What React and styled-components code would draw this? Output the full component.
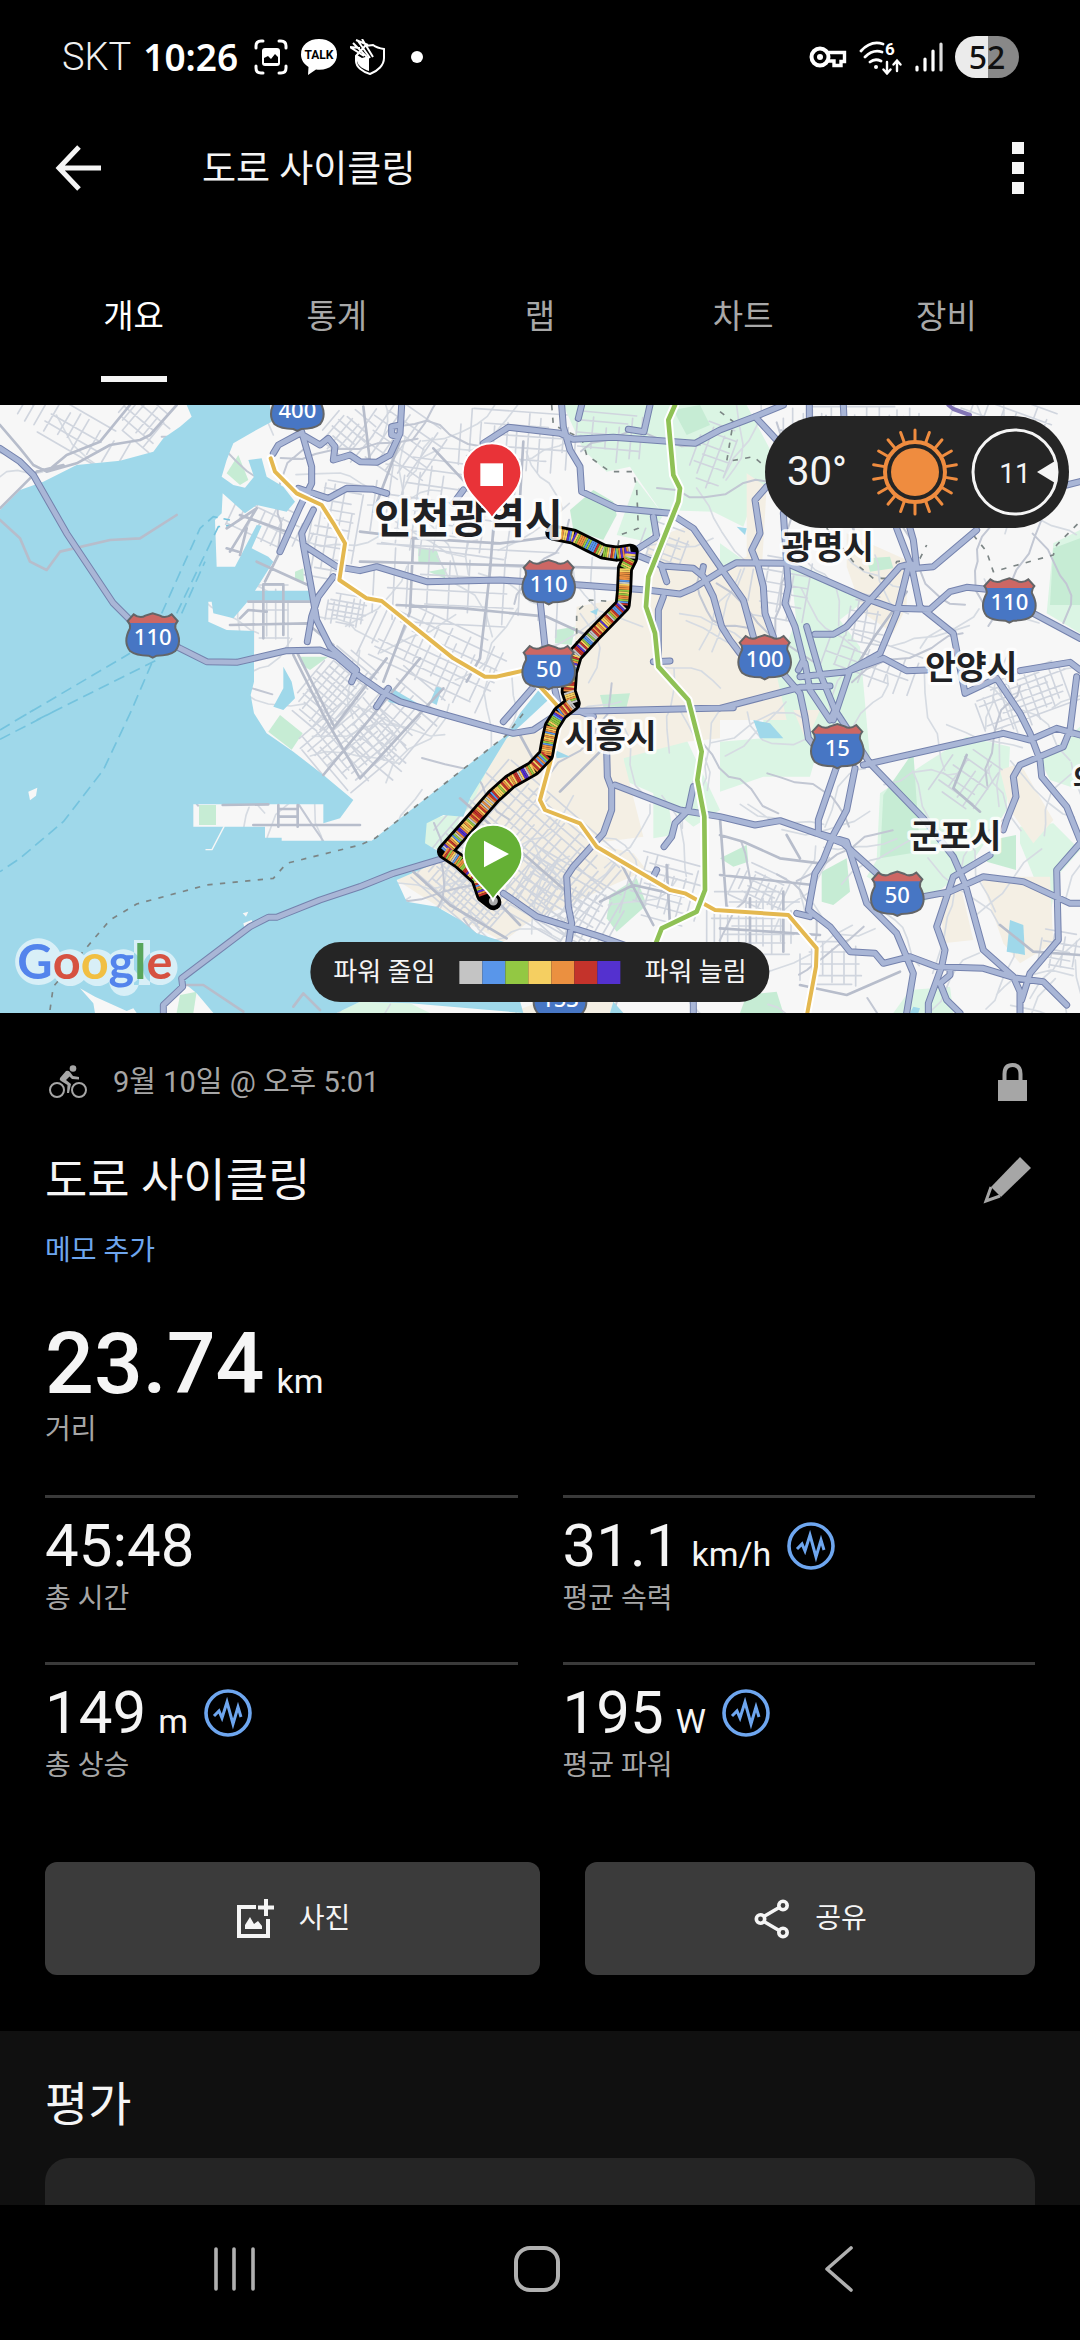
import React, { useState } from 'react';
import styled, { createGlobalStyle } from 'styled-components';

const GlobalStyle = createGlobalStyle`
  * {
    box-sizing: border-box;
  }
  body {
    margin: 0;
    background: #000;
    color: #f5f5f5;
    font-family: Roboto, 'Noto Sans CJK KR', sans-serif;
  }
  button {
    margin: 0;
    padding: 0;
    border: 0;
    background: none;
    color: inherit;
    font: inherit;
    cursor: pointer;
  }
  svg {
    display: block;
    flex: none;
  }
`;

const Screen = styled.div`
  min-height: 100vh;
  display: flex;
  flex-direction: column;
  background: #000;
`;

/* ---------- status bar ---------- */

const StatusBar = styled.div`
  height: 114px;
  padding: 0 61px 0 62px;
  display: flex;
  align-items: center;
  justify-content: space-between;
`;

const StatusGroup = styled.div`
  display: flex;
  align-items: center;
  gap: ${(p) => p.$gap}px;
`;

const Carrier = styled.span`
  font-size: 38px;
  line-height: 44px;
  font-weight: 300;
  color: #f0f0f0;
`;

const Clock = styled.span`
  margin-right: 4px;
  font-family: 'Noto Sans', sans-serif;
  font-size: 37px;
  line-height: 44px;
  font-weight: 600;
  color: #fff;
`;

const Dot = styled.span`
  width: 12px;
  height: 12px;
  margin-left: 13px;
  border-radius: 50%;
  background: #fff;
`;

const Battery = styled.span`
  width: 64px;
  height: 42px;
  border-radius: 21px;
  background: linear-gradient(90deg, #ebebeb 52%, #888 52%);
  color: #101010;
  font-family: 'Noto Sans', sans-serif;
  font-size: 32px;
  line-height: 42px;
  font-weight: 500;
  text-align: center;
`;

/* ---------- app bar and tabs ---------- */

const AppBar = styled.header`
  height: 108px;
  padding: 0 42px;
  display: flex;
  align-items: center;
`;

const IconButton = styled.button`
  height: 72px;
  display: flex;
  align-items: center;
  justify-content: center;
`;

const BackButton = styled(IconButton)`
  width: 72px;
`;

const MoreButton = styled(IconButton)`
  width: 40px;
`;

const BarTitle = styled.h1`
  flex: 1;
  margin: 0;
  padding: 4px 0 0 88px;
  font-size: 37px;
  line-height: 44px;
  font-weight: 400;
`;

const Tabs = styled.nav`
  padding: 0 32px 23px;
  display: flex;
`;

const Tab = styled.button`
  flex: 1;
  height: 160px;
  display: flex;
  flex-direction: column;
  align-items: center;
  justify-content: flex-end;
  gap: 39px;
  font-size: 33px;
  line-height: 40px;
  color: ${(p) => (p.$active ? '#fff' : '#a8a8a8')};

  &::after {
    content: '';
    width: 66px;
    height: 6px;
    background: ${(p) => (p.$active ? '#f5f5f5' : 'transparent')};
  }
`;

/* ---------- map ---------- */

const MapBox = styled.section`
  position: relative;
  aspect-ratio: 1080 / 608;
  overflow: hidden;
  background: #f7f7f7;
`;

const MapSvg = styled.svg`
  width: 100%;
  height: 100%;
`;

const Weather = styled.div`
  position: absolute;
  top: 11px;
  right: 11px;
  height: 112px;
  padding: 0 10px 0 22px;
  display: flex;
  align-items: center;
  border-radius: 56px;
  background: #252525;
`;

const Temperature = styled.span`
  width: 84px;
  font-size: 40px;
  line-height: 48px;
`;

const WindDial = styled.svg`
  margin-left: 12px;
`;

const Legend = styled.div`
  position: absolute;
  bottom: 11px;
  left: 50%;
  transform: translateX(-50%);
  height: 60px;
  padding: 0 23px;
  display: flex;
  align-items: center;
  gap: 24px;
  border-radius: 30px;
  background: #252525;
  font-size: 26px;
  line-height: 36px;
  white-space: nowrap;
`;

const Swatches = styled.div`
  display: flex;
`;

const Swatch = styled.span`
  width: 23px;
  height: 23px;
  background: ${(p) => p.$color};
`;

/* ---------- summary ---------- */

const Summary = styled.main`
  padding: 42px 45px 56px;
`;

const Row = styled.div`
  height: 54px;
  display: flex;
  align-items: center;
`;

const Meta = styled(Row)`
  color: #a6a6a6;
`;

const DateText = styled.span`
  flex: 1;
  margin-left: 22px;
  font-size: 29px;
  line-height: 36px;
`;

const TitleRow = styled(Row)`
  margin-top: 44px;
  justify-content: space-between;
`;

const Title = styled.h2`
  margin: 0;
  font-size: 46px;
  line-height: 54px;
  font-weight: 400;
`;

const EditButton = styled(IconButton)`
  width: 56px;
  color: #a6a6a6;
`;

const NoteButton = styled.button`
  display: block;
  margin-top: 26px;
  font-size: 28px;
  line-height: 36px;
  color: #6ea6ef;
`;

const Distance = styled.div`
  margin-top: 52px;
`;

const Value = styled.div`
  display: flex;
  align-items: baseline;
  gap: 12px;
  height: ${(p) => (p.$large ? 86 : 60)}px;
  font-size: ${(p) => (p.$large ? 86 : 60)}px;
  line-height: ${(p) => (p.$large ? 86 : 60)}px;
  font-weight: ${(p) => (p.$large ? 500 : 400)};

  svg {
    align-self: center;
    margin-left: 4px;
  }
`;

const Unit = styled.span`
  font-size: 34px;
  line-height: 36px;
  font-weight: 400;
`;

const Label = styled.div`
  margin-top: 5px;
  font-size: 28px;
  line-height: 36px;
  color: #a6a6a6;
`;

const Stats = styled.div`
  margin-top: 47px;
  display: grid;
  grid-template-columns: 1fr 1fr;
  gap: 45px;
`;

const Stat = styled.div`
  padding-top: 18px;
  border-top: 3px solid #3a3a3a;
`;

const Actions = styled.div`
  margin-top: 78px;
  display: grid;
  grid-template-columns: 11fr 10fr;
  gap: 45px;
`;

const ActionButton = styled.button`
  height: 113px;
  display: flex;
  align-items: center;
  justify-content: center;
  gap: 24px;
  border-radius: 12px;
  background: #3b3b3b;
  font-size: 28px;
  line-height: 36px;
`;

/* ---------- rating and system navigation ---------- */

const Rating = styled.section`
  flex: 1;
  padding: 44px 45px 0;
  display: flex;
  flex-direction: column;
  gap: 23px;
  background: #101010;
`;

const RatingTitle = styled.h2`
  margin: 0;
  font-size: 47px;
  line-height: 60px;
  font-weight: 400;
`;

const RatingCard = styled.div`
  flex: 1;
  min-height: 47px;
  border-radius: 24px 24px 0 0;
  background: #252525;
`;

const SystemNav = styled.nav`
  height: 135px;
  padding: 0 90px 0 84px;
  display: flex;
  align-items: center;
`;

const SystemButton = styled(IconButton)`
  flex: 1;
  padding-bottom: 8px;
`;

/* ---------- icons ---------- */

const CaptureIcon = () => (
  <svg width="34" height="36" viewBox="0 0 34 36" fill="none" stroke="#fff" strokeWidth="3" strokeLinecap="round">
    <path d="M2 9V7Q2 2 7 2H9M25 2H27Q32 2 32 7V9M32 27V29Q32 34 27 34H25M9 34H7Q2 34 2 29V27" />
    <rect x="8" y="9" width="18" height="18" rx="3" fill="#fff" stroke="none" />
    <path d="M10 24V19L14 17L17 20L21 15L24 18V24Z" fill="#000" stroke="none" />
  </svg>
);

const TalkIcon = () => (
  <svg width="38" height="36" viewBox="0 0 38 36">
    <path d="M19 0C8.500 0 1 6 1 15.500C1 21 4 25 8.500 28L8 36L16 30.500C29 32 37 25 37 15.500C37 6 29.500 0 19 0Z" fill="#fff" />
    <text x="19" y="20" textAnchor="middle" fontFamily="Roboto, sans-serif" fontWeight="700" fontSize="12" fill="#000">TALK</text>
  </svg>
);

const ShieldIcon = () => (
  <svg width="36" height="36" viewBox="0 0 36 36">
    <path d="M6 17V22C6 28 13 33 20 35C28 32 34 26 34 19V10Q27 9 23 6L15 7Z" fill="none" stroke="#fff" strokeWidth="2" />
    <path d="M7 16L12 19L19 17V32C13 30 8 27 7 22Z" fill="#fff" />
    <path d="M0 8L14 17M3 4L17 18M8 2L20 19M12 0L23 18M0 8L10 9M6 1L18 6" stroke="#fff" strokeWidth="2" />
  </svg>
);

const KeyIcon = () => (
  <svg width="38" height="22" viewBox="0 0 38 22" fill="none" stroke="#fff">
    <path d="M18 6.500H35.500V15.500H32V19.500H25V15H18" strokeWidth="3.400" />
    <circle cx="11" cy="11" r="8.500" strokeWidth="4" />
    <circle cx="11" cy="11" r="3" fill="#fff" stroke="none" />
  </svg>
);

const WifiIcon = () => (
  <svg width="44" height="36" viewBox="0 -2 44 36" fill="none" stroke="#fff" strokeWidth="2.800" strokeLinecap="round">
    <path d="M2 10Q12 -1 24 3M6 16Q14 8 23 11M11 21Q16 17 22 20" />
    <circle cx="17" cy="26" r="2" fill="#fff" stroke="none" />
    <path d="M28 21V32M24.500 28.500L28 32.500L31.500 28.500M38 30V20M34.500 23.500L38 19.500L41.500 23.500" strokeWidth="2.400" />
    <text x="26" y="14" fill="#fff" stroke="none" fontFamily="Roboto, sans-serif" fontSize="17" fontWeight="700">6</text>
  </svg>
);

const SignalIcon = () => (
  <svg width="28" height="30" viewBox="0 0 28 30" stroke="#fff" strokeWidth="3.200" strokeLinecap="round">
    <path d="M2 25V28M10 17V28M18 9V28" />
    <path d="M26 2V28" stroke="#ddd" />
  </svg>
);

const BackIcon = () => (
  <svg width="46" height="46" viewBox="0 0 46 46" fill="none" stroke="#f5f5f5" strokeWidth="5">
    <path d="M24 2L4 23L24 44M4 23H46" />
  </svg>
);

const MoreIcon = () => (
  <svg width="12" height="52" viewBox="0 0 12 52" fill="#f5f5f5">
    <path d="M0 0H12V12H0ZM0 20H12V32H0ZM0 40H12V52H0Z" />
  </svg>
);

const BikeIcon = () => (
  <svg width="46" height="34" viewBox="0 0 46 34" fill="none" stroke="#a6a6a6">
    <circle cx="12" cy="25" r="7" strokeWidth="2" />
    <circle cx="34" cy="25" r="7" strokeWidth="2" />
    <circle cx="28" cy="3.500" r="3.300" fill="#a6a6a6" stroke="none" />
    <path d="M15 13L21 6Q23 5 25 7L28 11L34 12V14.500L27 14L24.500 11.500L21 15L26 19L24 28H22L22.500 20L16 16Q14 15 15 13Z" fill="#a6a6a6" stroke="none" />
  </svg>
);

const LockIcon = () => (
  <svg width="42" height="38" viewBox="0 0 42 38" fill="#a6a6a6">
    <path d="M5 17H34V38H5Z" />
    <path d="M11.500 18V11Q11.500 2 19.500 2T27.500 11V18" fill="none" stroke="#a6a6a6" strokeWidth="4" />
  </svg>
);

const PencilIcon = () => (
  <svg width="48" height="48" viewBox="0 0 48 48" fill="currentColor">
    <path d="M37 1L48 12L18 41L8 31Z" />
    <path d="M8 31L3 45L17 40" fill="none" stroke="currentColor" strokeWidth="3" />
  </svg>
);

const PulseIcon = () => (
  <svg width="48" height="48" viewBox="0 0 48 48" fill="none" stroke="#6ea6ef">
    <circle cx="24" cy="24" r="22" strokeWidth="3.600" />
    <path d="M10 27L15 22L18 29L23 13L29 35L34 18L37 28" strokeWidth="3" />
  </svg>
);

const PhotoIcon = () => (
  <svg width="40" height="40" viewBox="0 0 40 40" fill="none" stroke="#f5f5f5" strokeWidth="4">
    <path d="M21 8H4V37H33V20" />
    <path d="M31 0V17M23 8.500H39" />
    <path d="M10 30V26L15 18L19 25L23 22L27 27V30Z" fill="#f5f5f5" stroke="none" />
  </svg>
);

const ShareIcon = () => (
  <svg width="38" height="40" viewBox="0 0 38 40" fill="none" stroke="#f5f5f5" strokeWidth="3.600">
    <path d="M10 18L27 8M10 22L27 32" />
    <circle cx="7.500" cy="20" r="4.200" />
    <circle cx="30" cy="6.500" r="4.200" />
    <circle cx="30" cy="33.500" r="4.200" />
  </svg>
);

const rays = Array.from({ length: 18 }, (_, i) => i * 20);

const SunIcon = () => (
  <svg width="88" height="88" viewBox="-44 -44 88 88">
    <circle r="24" fill="#ef8c3f" />
    <circle r="30" fill="none" stroke="#ef8c3f" strokeWidth="4" />
    {rays.map((a) => (
      <path key={a} d="M0 -31V-42" stroke="#ef8c3f" strokeWidth="3" strokeLinecap="round" transform={`rotate(${a})`} />
    ))}
  </svg>
);

/* ---------- map data, three units per pixel ---------- */

const WATER = `M0 315L60 255L130 230L230 180L360 167L460 140L490 100L540 65L575 35L560 0L810 0L815 50L760 80L700 115
  L680 165L665 215L700 240L735 248L762 215L745 165L785 160L800 215L850 245L885 290L860 320L770 300L735 325L668 265
  L665 325L645 345L650 485L705 485L770 360L785 362L755 430L805 455L820 470L765 557L935 557L930 587L745 587L700 640
  L640 625L635 590L625 590L625 650L680 675L762 678L762 830L752 870L762 925L800 985L880 1040L970 1110L1060 1185
  L1020 1240L970 1255L970 1198L580 1198L580 1265L795 1265L795 1298L845 1298L845 1307L1115 1307L1520 990L1560 925
  L1620 850L1650 880L1580 945L1520 1000L1410 1180L1390 1235L1330 1230L1280 1255L1275 1315L1325 1345L1305 1375
  L1190 1425L1220 1490L1310 1505L1380 1545L1430 1585L1510 1610L1570 1824L1230 1795L1080 1790L1010 1824L640 1824
  L590 1765L560 1740L490 1800L480 1824H410L400 1810L380 1818L285 1775L240 1750L280 1795L285 1824H0Z`;

const PALE_GREEN = [
  'M1690 0H2240L2340 190L2260 280L2230 365L2140 320L1980 315L1910 215L1890 185L1820 200L1750 135Z',
  'M1850 390L1910 225L1990 330L1940 410Z',
  'M2160 415L2230 465L2260 610L2230 690L2160 560Z',
  'M2370 465L2540 545L2590 590L2460 690L2390 660Z',
  'M2400 615L2490 605L2580 725L2610 1060L2450 1045L2430 1115L2290 1115L2160 1160L2160 1010L2290 1000L2290 900Z',
  'M2630 1365L2640 1165L2760 1085L2900 995L3030 1025L3020 1215L2900 1395L2760 1500L2600 1415Z',
  'M3120 1065L3240 965V1155L3150 1125Z',
  'M3060 1265L3160 1255L3240 1335L3170 1415L3150 1535L3060 1315Z',
  'M3160 415L3240 375V685L3140 625Z',
  'M2730 1755L2850 1745L2860 1824H2680Z',
  'M1870 1055L2060 1005L2160 1215L2080 1265L1960 1165L1870 1125Z',
  'M1270 1250L1340 1230L1500 1015L1560 975L1460 1165L1380 1235L1350 1345L1275 1320Z',
  'M1080 1790L1230 1795L1290 1824H1010Z',
  'M1960 1160L2000 1160L2020 1290L1960 1300Z',
];

const BEIGE = [
  'M1730 605L1840 585L1950 545L1940 405L2060 365L2160 485L2160 1000L2060 1010L1870 1060L1930 1295L1780 1315L1900 1345L1940 1395L1580 1555L1510 1610L1330 1515L1190 1425L1330 1345L1400 1235L1500 1005L1640 975L1680 885L1720 785Z',
  'M2240 205L2300 245L2280 585L2360 945H2160V485L2240 455Z',
  'M2540 385L2720 465L2720 605L2680 685L2590 625L2540 485Z',
  'M2820 1455L2880 1435L2920 1605L2830 1615Z',
  'M3000 1095L3060 1075L3160 1245L3100 1315L3030 1215Z',
  'M2940 1415L3150 1415L3160 1615L3060 1675L3010 1615Z',
  'M1530 1824L1620 1790H1850L1830 1824Z',
  'M2380 915H2460L2420 1010Z',
];

const GREEN = [
  'M680 205L715 150L745 225L720 240Z',
  'M885 500L910 490L912 530L885 525Z',
  'M900 755L985 755L930 795L905 780Z',
  'M597 1200H648V1260H597Z',
  'M840 930L908 985L875 1034L805 980Z',
  'M1255 430L1310 435L1325 480L1255 470Z',
  'M1285 500L1340 490L1335 520Z',
  'M1710 315L1780 255L1840 290L1850 330L1810 405L1720 375Z',
  'M1665 675L1725 665L1715 720L1665 715Z',
  'M1800 870L1890 865L1880 905L1810 905Z',
  'M2020 15L2100 0L2130 60L2060 90Z',
  'M1830 1470L1910 1420L1940 1500L1850 1580L1820 1540Z',
  'M2465 1400L2540 1360L2550 1460L2500 1500L2465 1490Z',
  'M2160 1360L2240 1320L2245 1370L2200 1385Z',
  'M2640 1360L2650 1170L2740 1040L2760 1340Z',
  'M3000 1300L3048 1290V1395L2960 1370Z',
  'M540 1770L590 1760L580 1824H530Z',
  'M2240 1770L2330 1760L2350 1824H2220Z',
  'M2600 460L2670 455L2680 490L2610 500Z',
  'M3160 430L3240 400V600L3150 600Z',
];

const SMALL_WATER = [
  'M850 785L875 830L885 880L850 915L820 905L850 850Z',
  'M1175 850L1270 905L1240 910L1165 890Z',
  'M1310 845L1325 850L1310 900L1290 890Z',
  'M2260 945L2310 955L2350 1000L2280 1000Z',
  'M3030 1545L3070 1560L3075 1650L3020 1640Z',
  'M1770 620L1795 610L1790 630Z',
  'M2210 365L2240 370L2235 390Z',
  'M1665 1035L1710 1055L1670 1060Z',
  'M1840 1790L1870 1824H1830Z',
  'M2740 1805L2760 1810L2755 1824H2730Z',
  'M795 240L850 260L870 275L860 285L800 255Z',
];

const LAND_BITS = ['M85 1160L112 1148L108 1172L90 1186Z', 'M730 1555L755 1545L760 1560L735 1575Z', 'M728 1525L745 1520L738 1535Z'];

const ROADS = [
  'M0 345L60 400L90 470L140 495L180 440L330 405L420 400L530 330',
  'M0 60L60 130L100 180L140 200',
  'M140 200L200 150L300 110L390 0',
  'M140 200L230 175L330 120L420 105L450 90L530 0',
  'M0 310L60 250L110 200L190 180',
  'M1090 5L1110 170M1200 110L1120 320',
  'M1080 380L1250 400L1500 415L1660 395',
  'M1190 600L1390 610L1640 635L1780 700',
  'M1490 240L1470 500L1440 760L1400 830',
  'M1240 400L1230 620L1150 830',
  'M1300 130L1450 290',
  'M1080 470L1500 480L1860 490',
  'M1570 110L1560 280L1530 300',
  'M790 540V700M850 540V690M790 538H850M745 590H935M690 660L920 655L1000 720',
  'M720 640L745 615L800 620',
  'M680 370L770 310M720 330L860 380M690 440L770 310M720 450L740 370M680 430L715 440',
  'M840 440L795 530M770 470L935 545',
  'M880 750L970 930L1080 1120',
  'M668 1200L805 1198M835 1200V1265M893 1200V1265M760 1260H1080M840 1212H890M840 1235H890',
  'M1000 970L1160 760M970 1110L1260 760M1080 1120L1330 850M890 740L1000 960',
  'M2160 1290L2230 1310L2340 1360L2460 1375M2180 1510L2160 1240',
  'M2360 1290L2400 1360M2160 1410L2440 1440M2160 1570L2460 1590M2250 1480V1700M2350 1460V1640',
  'M1680 1160L1780 1060L1810 1030M1560 990L1620 1100',
  'M1380 1180L1700 1460M1340 1330L1560 1560M1240 1400L1350 1500L1520 1600',
  'M2560 800L2620 700L2720 560',
  'M2900 1050L2860 1150L2940 1220',
  'M3240 1650L3100 1640L3000 1560',
  'M1800 1490L1900 1440L2080 1480M1860 1370L1960 1560M2000 1380L2010 1560',
  'M2400 1740L2540 1770L2700 1700',
  'M560 1740H610L730 1820M880 1805L910 1765L960 1815',
];

const HIGHWAYS = [
  'M0 130L60 170L100 210L200 385L340 595L400 655L540 730L620 770L710 772L860 737L960 735L1010 755L1080 815L1145 860L1200 890L1320 925L1480 970L1540 985L1600 975L1660 935',
  'M820 145L835 120L900 85L960 120L985 100L1005 125L1000 165L1050 150L1080 170L1130 172L1170 150L1200 85L1205 0M1200 60L1175 65V90L1195 95',
  'M905 80L935 185L935 235L900 305L840 440',
  'M895 250L985 280L1040 250L1120 253L1160 265',
  'M940 315L905 385L910 420L1010 485L1080 497L1130 485L1280 530L1500 525L1740 540L1940 555L2040 567L2080 550L2160 500L2210 473L2360 475L2610 585L2680 610L2790 613L2850 560L2900 547L2960 553',
  'M910 420L935 555L950 645L990 725L1070 795L1055 830',
  'M1000 515L955 575L935 635L922 710',
  'M1450 115L1525 67L1680 85L1720 103L1840 97L2085 115L2160 75L2265 35L2350 0M2265 35L2330 105',
  'M1685 0L1690 65L1710 135L1740 185L1745 260L1850 310L2010 325L2080 370L2160 485L2230 585L2260 695',
  'M1950 0L1932 80L1885 73M1745 0L1735 40M1360 295L1390 255',
  'M1860 435L1900 440L1970 395L1960 335M1910 450L1990 483L2080 490L2105 510L2110 485M1985 485L2000 530',
  'M2110 515L2140 575L2165 665L2190 705L2220 745',
  'M1990 575L1975 615V765M1960 770L2010 768',
  'M1620 585L1635 725M1165 850L1130 905M1610 835L1510 950M1665 855L1680 920L2200 908',
  'M490 1824L490 1800L548 1745L545 1720L750 1565L805 1537H830L960 1485L1080 1445L1180 1405L1330 1360',
  'M1820 1035L1822 1115L1835 1150V1215L1810 1285L1720 1385L1700 1415L1705 1505L1715 1555L1705 1620',
  'M1845 1140L2040 1215L2160 1235L2265 1260L2340 1247L2450 1285L2530 1315L2630 1405',
  'M2080 1145L2065 1215L2025 1255L2015 1295L1992 1325M1970 1395L1960 1415M1730 915L1780 935',
  'M1510 1465L1610 1535L1800 1595L1900 1630M2080 1824V1780',
  'M2428 0V40M2530 0L2532 40M3100 625L3240 700',
  'M2300 245L2265 285L2280 385L2255 435L2275 485L2290 545L2295 625L2320 695',
  'M2350 325L2360 475L2365 545L2355 595L2385 665L2410 765L2395 795M2340 795L2400 865L2415 935L2425 1000L2450 1030',
  'M2420 665L2460 805L2505 915M2445 688H2500L2540 665L2700 485L2720 480',
  'M2690 370L2730 475L2750 485L2740 405L2730 370M2735 485L2760 605L2860 685L2895 865L2990 820L3060 925L3090 985L3120 1065L3125 1115L3200 1205L3240 1305',
  'M2930 375L2800 485L2750 490M2725 485L2690 625L2640 745L2550 795L2500 945',
  'M2160 910L2400 847L2490 843M2400 815L2540 800L2650 760L2720 797L2780 795',
  'M3060 797L3210 772L3240 795M3230 815L3210 975L3190 1025L3060 1080L3040 1115L3048 1175L3020 1245L3010 1275M3200 240L3240 230',
  'M2415 775L2430 855L2490 945L2505 915L2610 1075L2770 1240L2860 1355L2895 1435L2950 1635L3040 1715L3060 1760V1824',
  'M2590 1080L3010 985L3090 1005L3170 970L3240 990',
  'M2510 1085L2455 1245V1285L2540 1310L2600 1495L2690 1585L2740 1705L2720 1824',
  'M2565 1090L2540 1215L2500 1290L2470 1365L2445 1405L2425 1515L2490 1565L2550 1640L2625 1645L2650 1675L2730 1655L2810 1685L2950 1690L3050 1720L3130 1730L3200 1800',
  'M2770 1475L2850 1460L2950 1415L3070 1430L3210 1495H3240M2970 1350L2860 1415L2810 1565L2835 1635L2825 1685L2785 1795V1824',
  'M3240 1315L3170 1395L3175 1605L3090 1705L3065 1785M2850 1690V1710L2820 1735L2840 1785L2880 1824',
  'M2390 1525L2430 1535',
];

const YELLOW_LINE = 'M812 160L825 200L890 265L965 300L1000 355L1035 415L1018 525L1100 580L1145 588L1360 760L1455 815H1490L1570 797L1625 850L1670 900L1675 960L1650 1075L1620 1185L1635 1215L1740 1255L1790 1325L2010 1455L2055 1465L2145 1515L2365 1530L2450 1630L2448 1685L2422 1824';
const GREEN_LINE = 'M2025 0L2005 45L2020 210L2040 250L2035 290L1945 515L1938 605L1965 685L1975 785L2065 885L2105 1040L2092 1125L2113 1235L2115 1455L2090 1520L1985 1570L1950 1660';

const BORDERS = [
  'M150 1815L160 1745L245 1645L330 1545L410 1497L620 1440L820 1420L860 1375L1080 1320L1125 1300L1520 990L1570 925',
  'M1655 0L1660 60L1745 100L1760 150L1830 200H1900L1910 250L1915 370L1860 390L1850 440',
  'M1730 800V620L1770 585L1840 590',
  'M2160 20L2200 50L2180 170L2260 155L2290 180',
  'M2480 370L2560 470L2620 520H2670L2690 470L2760 460L2780 420',
  'M2920 390L2960 440L2980 500L3160 450L3170 420L3240 350',
];

const FERRIES = [
  'M50 945L390 745M110 945L480 760',
  'M485 625L600 370L640 335L690 345M530 625L655 365L700 360M545 625L615 470',
  'M455 775L395 915L310 1095L190 1250L60 1360L0 1400M0 975L100 915M0 1003L170 915',
];

const SHIELDS = [
  [892, 10, '400'], [458, 690, '110'], [1646, 530, '110'], [1646, 785, '50'], [3028, 585, '110'],
  [2294, 755, '100'], [2512, 1022, '15'], [2692, 1465, '50'], [1680, 1775, '153'],
];

const CITIES = [
  [1122, 385, 123, '인천광역시'], [1694, 1030, 100, '시흥시'], [2346, 463, 100, '광명시'],
  [2776, 823, 100, '안양시'], [2728, 1328, 100, '군포시'], [3218, 1153, 84, '의왕시'],
];

const ROUTE = [
  [1660, 383], [1720, 395], [1770, 420], [1810, 440], [1850, 446], [1892, 440], [1890, 460],
  [1875, 490], [1872, 560], [1868, 600], [1780, 690], [1725, 750], [1710, 800], [1706, 860], [1718, 895],
  [1680, 925], [1655, 965], [1645, 1010], [1638, 1050], [1600, 1090], [1530, 1130], [1480, 1175], [1410, 1255],
  [1335, 1340], [1380, 1370], [1435, 1420], [1452, 1470], [1480, 1492],
];

const POWER_COLORS = ['#c4c4c4', '#5996ea', '#93c843', '#f5cf61', '#eb9040', '#c4332b', '#5431cf'];

// small repeatable random so the street texture does not change between renders
const makeRandom = (seed) => {
  let s = seed;
  return () => {
    s = (s * 16807) % 2147483647;
    return s / 2147483647;
  };
};

const wander = (count, seed, length) => {
  const rnd = makeRandom(seed);
  let d = '';
  for (let i = 0; i < count; i++) {
    let x = rnd() * 3240;
    let y = rnd() * 1824;
    let a = rnd() * Math.PI * 2;
    d += `M${Math.round(x)} ${Math.round(y)}`;
    for (let j = 0; j < length; j++) {
      a += (rnd() - 0.5) * 1.1;
      const step = 25 + rnd() * 50;
      x += Math.cos(a) * step;
      y += Math.sin(a) * step;
      d += `L${Math.round(x)} ${Math.round(y)}`;
    }
  }
  return d;
};

const grid = ([cx, cy, w, h, angle, step], seed) => {
  const rnd = makeRandom(seed * 977 + 13);
  const t = (angle * Math.PI) / 180;
  const at = (u, v) => `${Math.round(cx + u * Math.cos(t) - v * Math.sin(t))} ${Math.round(cy + u * Math.sin(t) + v * Math.cos(t))}`;
  let d = '';
  for (let u = -w / 2; u <= w / 2; u += step * (0.7 + rnd() * 0.6)) {
    d += `M${at(u, (-h / 2) * (0.4 + rnd() * 0.6))}L${at(u, (h / 2) * (0.4 + rnd() * 0.6))}`;
  }
  for (let v = -h / 2; v <= h / 2; v += step * (0.7 + rnd() * 0.6)) {
    d += `M${at((-w / 2) * (0.4 + rnd() * 0.6), v)}L${at((w / 2) * (0.4 + rnd() * 0.6), v)}`;
  }
  return d;
};

// centre x, centre y, width, height, angle, spacing
const GRIDS = [
  [1590, 1340, 520, 340, 41, 26], [1400, 1440, 300, 200, 41, 20], [1680, 1490, 360, 220, 30, 24],
  [1000, 860, 160, 260, 40, 20], [1060, 1020, 240, 260, 50, 22], [1190, 960, 200, 300, 40, 36],
  [1300, 750, 420, 220, 25, 34], [1330, 320, 420, 300, 8, 44], [1200, 120, 240, 220, 35, 34],
  [1400, 560, 560, 260, 3, 50], [1560, 110, 360, 180, 4, 40], [2260, 1560, 280, 200, 0, 26],
  [2280, 1450, 160, 120, 25, 22], [3080, 880, 300, 160, -20, 24], [2900, 1130, 160, 180, 35, 34],
  [2600, 650, 110, 160, 10, 26], [2620, 780, 300, 140, 20, 40], [2500, 1680, 200, 140, 0, 32],
  [2000, 1460, 240, 200, 15, 30], [1000, 380, 140, 300, 10, 30], [820, 360, 260, 120, 25, 34],
  [1040, 620, 120, 100, 10, 18], [820, 640, 120, 200, 0, 34], [230, 80, 360, 120, 30, 40],
  [430, 50, 150, 130, 40, 28], [1820, 100, 260, 150, 5, 38], [2340, 560, 180, 200, 10, 38],
  [3180, 1640, 120, 120, 10, 28], [2140, 160, 120, 200, 20, 36], [2560, 80, 420, 150, 0, 30],
  [2000, 430, 160, 130, 20, 26], [3000, 60, 300, 180, 20, 44], [1040, 90, 130, 150, 40, 28],
];

const streets = wander(180, 7919, 5);
const lanes = wander(50, 4241, 7);
const blocks = GRIDS.map(grid).join('');

const powerSlices = () => {
  const rnd = makeRandom(271);
  const mix = [0, 1, 2, 3, 3, 4, 4, 4, 5, 5, 3, 0, 2, 6];
  const out = [];
  for (let i = 1; i < ROUTE.length - 1; i++) {
    const [x1, y1] = ROUTE[i - 1];
    const [x2, y2] = ROUTE[i];
    const n = Math.max(1, Math.round(Math.hypot(x2 - x1, y2 - y1) / 6));
    for (let k = 0; k < n; k++) {
      const px = (t) => `${(x1 + (x2 - x1) * t).toFixed(1)} ${(y1 + (y2 - y1) * t).toFixed(1)}`;
      out.push({
        d: `M${px(k / n)}L${px((k + 1) / n)}`,
        color: POWER_COLORS[mix[Math.floor(rnd() * mix.length)]],
      });
    }
  }
  return out;
};

const slices = powerSlices();
const routePath = `M${ROUTE.map((p) => p.join(' ')).join('L')}`;

const Shield = ({ x, y, number }) => (
  <g transform={`translate(${x} ${y})`}>
    <path
      d="M-57 -62Q-38 -48 -22 -58L0 -65L22 -58Q38 -48 57 -62L75 -42Q66 -32 68 -20Q90 20 68 48Q50 62 12 62L0 68L-12 62Q-50 62 -68 48Q-90 20 -68 -20Q-66 -32 -75 -42Z"
      fill="#4776c4"
    />
    <path d="M-57 -62Q-38 -48 -22 -58L0 -65L22 -58Q38 -48 57 -62L75 -42L67 -36H-67L-75 -42Z" fill="#cc6764" />
    <path
      d="M-57 -62Q-38 -48 -22 -58L0 -65L22 -58Q38 -48 57 -62L75 -42Q66 -32 68 -20Q90 20 68 48Q50 62 12 62L0 68L-12 62Q-50 62 -68 48Q-90 20 -68 -20Q-66 -32 -75 -42Z"
      fill="none"
      stroke="#636568"
      strokeWidth="6"
    />
    <text y="30" textAnchor="middle" fill="#fff" fontFamily="Noto Sans, sans-serif" fontSize="66" fontWeight="500">
      {number}
    </text>
  </g>
);

const Pin = ({ x, y, color, children }) => (
  <g transform={`translate(${x} ${y})`}>
    <path d="M0 4C-14 -30 -88 -72 -88 -134A88 88 0 0 1 88 -134C88 -72 14 -30 0 4Z" fill={color} stroke="#fff" strokeWidth="6" />
    {children}
  </g>
);

const GoogleLogo = () => (
  <g>
    <path
      d="M115 1600A70 70 0 1 0 116 1600ZM210 1633A55 55 0 1 0 211 1633ZM292 1633A55 55 0 1 0 293 1633ZM370 1633A55 55 0 1 0 371 1633ZM372 1683A45 45 0 1 0 373 1683ZM402 1605H450V1740H402ZM480 1636A52 52 0 1 0 481 1636Z"
      fill="#d8eff7"
    />
    <text x="52" y="1722" fontFamily="Lato, sans-serif" fontWeight="700" fontSize="146">
      <tspan fill="#5384ec">G</tspan>
      <tspan fill="#d65241">o</tspan>
      <tspan fill="#f1bf42">o</tspan>
      <tspan fill="#5384ec">g</tspan>
      <tspan fill="#58a65c">l</tspan>
      <tspan fill="#d65241">e</tspan>
    </text>
  </g>
);

const RideMap = () => (
  <MapSvg viewBox="0 0 3240 1824" preserveAspectRatio="xMidYMid slice" role="img" aria-label="지도">
    <rect width="3240" height="1824" fill="#f7f7f7" />
    {PALE_GREEN.map((d) => <path key={d} d={d} fill="#dbf5e4" />)}
    {BEIGE.map((d) => <path key={d} d={d} fill="#f4efe4" />)}
    {GREEN.map((d) => <path key={d} d={d} fill="#c6ecd4" />)}
    <g fill="none" strokeLinejoin="round" strokeLinecap="round">
      <path d={streets} stroke="#d6dbe2" strokeWidth="5" />
      <path d={blocks} stroke="#d0d5de" strokeWidth="5" />
      <path d={lanes} stroke="#c2c7d3" strokeWidth="6" />
    </g>
    <path d={WATER} fill="#9fd8ea" />
    {SMALL_WATER.map((d) => <path key={d} d={d} fill="#9fd8ea" />)}
    {LAND_BITS.map((d) => <path key={d} d={d} fill="#f7f7f7" />)}
    <g fill="none" strokeLinejoin="round" strokeLinecap="round">
      <path d="M672 1265L636 1334H618" stroke="#f7f7f7" strokeWidth="4" />
      <path d={FERRIES.join('')} stroke="#74c3de" strokeWidth="5" strokeDasharray="34 18" strokeLinecap="butt" />
      <path d={ROADS.join('')} stroke="#b7bdcb" strokeWidth="8" />
      <path d={BORDERS.join('')} stroke="#7c8585" strokeWidth="5" strokeDasharray="16 22" strokeLinecap="butt" />
      <path d={HIGHWAYS.join('')} stroke="#7482ad" strokeWidth="21" />
      <path d={HIGHWAYS.join('')} stroke="#a9b6d6" strokeWidth="15" />
      <path d={YELLOW_LINE} stroke="#fff" strokeWidth="24" />
      <path d={YELLOW_LINE} stroke="#e4b84f" strokeWidth="12" />
      <path d={GREEN_LINE} stroke="#fff" strokeWidth="26" />
      <path d={GREEN_LINE} stroke="#8fc155" strokeWidth="14" />
      <path d="M2845 0L2860 12L2910 30" stroke="#8275b5" strokeWidth="12" />
    </g>
    <path d={routePath} fill="none" stroke="#000" strokeWidth="48" strokeLinejoin="round" strokeLinecap="round" />
    {slices.map((s) => <path key={s.d} d={s.d} stroke={s.color} strokeWidth="31" />)}
    {SHIELDS.map(([x, y, n]) => <Shield key={`${x}-${y}`} x={x} y={y} number={n} />)}
    <g fill="#202124" stroke="#fff" strokeOpacity=".85" strokeWidth="20" strokeLinejoin="round" paintOrder="stroke" fontFamily="Noto Sans CJK KR, sans-serif" fontWeight="700">
      {CITIES.map(([x, y, size, name]) => <text key={name} x={x} y={y} fontSize={size}>{name}</text>)}
    </g>
    <circle cx="1480" cy="1488" r="18" fill="#aaa" stroke="#000" strokeWidth="9" />
    <Pin x={1476} y={337} color="#e93338">
      <path d="M-35 -162H33V-94H-35Z" fill="#fff" />
    </Pin>
    <Pin x={1479} y={1481} color="#65b035">
      <path d="M-27 -174L48 -134L-27 -94Z" fill="#fff" />
    </Pin>
    <GoogleLogo />
  </MapSvg>
);

/* ---------- page ---------- */

const tabs = ['개요', '통계', '랩', '차트', '장비'];

const stats = [
  { label: '총 시간', value: '45:48' },
  { label: '평균 속력', value: '31.1', unit: 'km/h', pulse: true },
  { label: '총 상승', value: '149', unit: 'm', pulse: true },
  { label: '평균 파워', value: '195', unit: 'W', pulse: true },
];

const App = () => {
  const [active, setActive] = useState('개요');

  return (
    <Screen>
      <GlobalStyle />
      <StatusBar>
        <StatusGroup $gap={12}>
          <Carrier>SKT</Carrier>
          <Clock>10:26</Clock>
          <CaptureIcon />
          <TalkIcon />
          <ShieldIcon />
          <Dot />
        </StatusGroup>
        <StatusGroup $gap={12}>
          <KeyIcon />
          <WifiIcon />
          <SignalIcon />
          <Battery>52</Battery>
        </StatusGroup>
      </StatusBar>

      <AppBar>
        <BackButton aria-label="뒤로"><BackIcon /></BackButton>
        <BarTitle>도로 사이클링</BarTitle>
        <MoreButton aria-label="더보기"><MoreIcon /></MoreButton>
      </AppBar>

      <Tabs role="tablist">
        {tabs.map((name) => (
          <Tab key={name} role="tab" aria-selected={active === name} $active={active === name} onClick={() => setActive(name)}>
            {name}
          </Tab>
        ))}
      </Tabs>

      <MapBox>
        <RideMap />
        <Weather>
          <Temperature>30°</Temperature>
          <SunIcon />
          <WindDial width="88" height="88" viewBox="-44 -44 88 88">
            <circle r="42" fill="none" stroke="#f5f5f5" strokeWidth="3" />
            <path d="M22 0L40 -11Q44 0 40 11Z" fill="#f5f5f5" />
            <text y="11" textAnchor="middle" fontSize="28" fill="#f5f5f5">11</text>
          </WindDial>
        </Weather>
        <Legend>
          <span>파워 줄임</span>
          <Swatches>
            {POWER_COLORS.map((c) => <Swatch key={c} $color={c} />)}
          </Swatches>
          <span>파워 늘림</span>
        </Legend>
      </MapBox>

      <Summary>
        <Meta>
          <BikeIcon />
          <DateText>9월 10일 @ 오후 5:01</DateText>
          <LockIcon />
        </Meta>
        <TitleRow>
          <Title>도로 사이클링</Title>
          <EditButton aria-label="편집"><PencilIcon /></EditButton>
        </TitleRow>
        <NoteButton>메모 추가</NoteButton>
        <Distance>
          <Value $large>23.74<Unit>km</Unit></Value>
          <Label>거리</Label>
        </Distance>
        <Stats>
          {stats.map((s) => (
            <Stat key={s.label}>
              <Value>
                {s.value}
                {s.unit && <Unit>{s.unit}</Unit>}
                {s.pulse && <PulseIcon />}
              </Value>
              <Label>{s.label}</Label>
            </Stat>
          ))}
        </Stats>
        <Actions>
          <ActionButton><PhotoIcon />사진</ActionButton>
          <ActionButton><ShareIcon />공유</ActionButton>
        </Actions>
      </Summary>

      <Rating>
        <RatingTitle>평가</RatingTitle>
        <RatingCard />
      </Rating>

      <SystemNav>
        <SystemButton aria-label="최근 앱">
          <svg width="42" height="44" viewBox="0 0 42 44" stroke="#b0b0b0" strokeWidth="3.600" strokeLinecap="round">
            <path d="M2 2V42M20 2V42M39 2V42" />
          </svg>
        </SystemButton>
        <SystemButton aria-label="홈">
          <svg width="46" height="46" viewBox="0 0 46 46" fill="none" stroke="#b0b0b0" strokeWidth="4">
            <rect x="2" y="2" width="42" height="42" rx="14" />
          </svg>
        </SystemButton>
        <SystemButton aria-label="이전">
          <svg width="30" height="46" viewBox="0 0 30 46" fill="none" stroke="#b0b0b0" strokeWidth="3.600" strokeLinecap="round" strokeLinejoin="round">
            <path d="M27 2L3 23L27 44" />
          </svg>
        </SystemButton>
      </SystemNav>
    </Screen>
  );
};

export default App;
